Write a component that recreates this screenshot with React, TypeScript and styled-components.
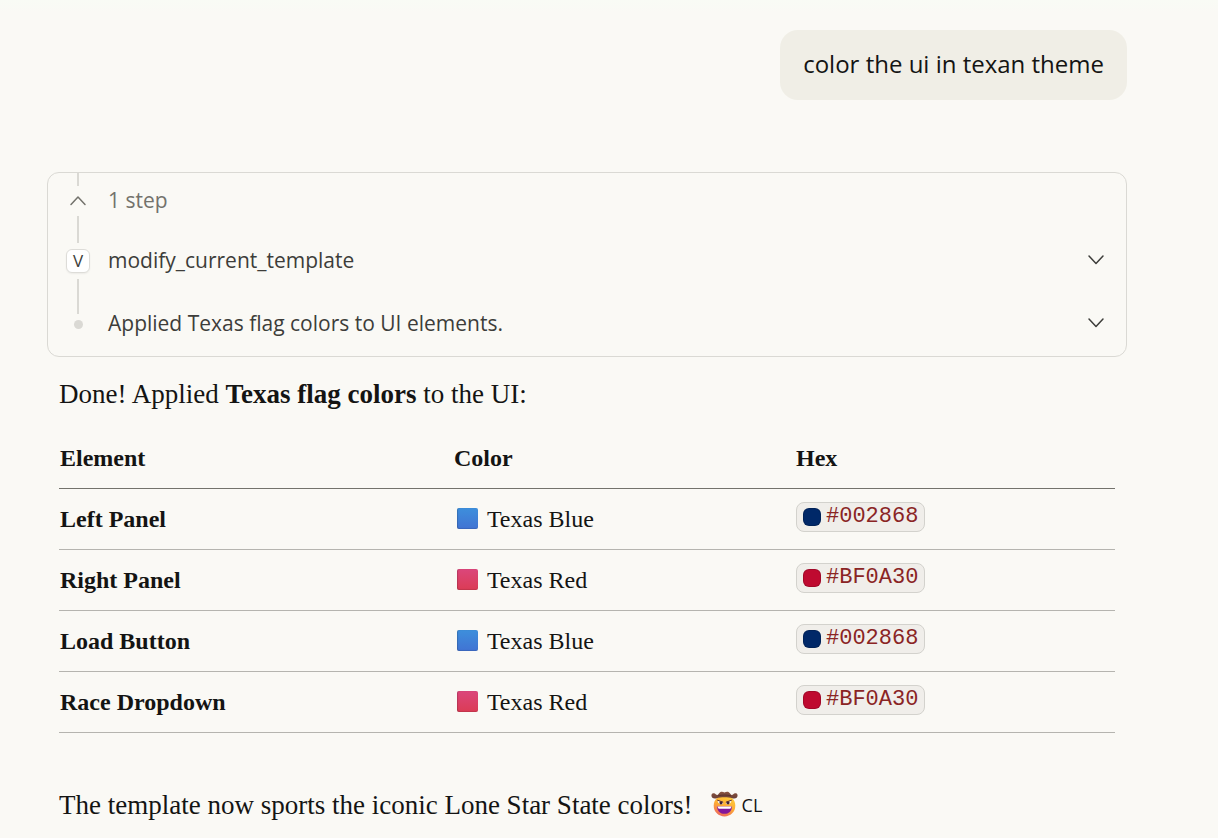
import React, { useId } from "react";
import styled, { createGlobalStyle } from "styled-components";

const sans = `"Open Sans", "Noto Sans", sans-serif`;
const serif = `"Liberation Serif", "Times New Roman", serif`;
const mono = `"Liberation Mono", "Courier New", monospace`;

const GlobalStyle = createGlobalStyle`
  *, *::before, *::after { box-sizing: border-box; }
  body {
    margin: 0;
    background: #faf9f5;
    color: #141413;
    font-family: ${serif};
  }
`;

const Page = styled.main`
  display: flex;
  flex-direction: column;
  padding: 30px 91px 14px 47px;
  background: linear-gradient(#f9fbf5, #faf9f5 12px);
`;

const UserBubble = styled.div`
  align-self: flex-end;
  padding: 16px 23px 18px;
  border-radius: 18px;
  background: #f0eee6;
  font: 24px/36px ${sans};
`;

const StepsCard = styled.section`
  display: flex;
  flex-direction: column;
  margin-top: 72px;
  border: 1px solid #dad9d4;
  border-radius: 12px;
  overflow: hidden;
`;

const StepRow = styled.button<{ $muted?: boolean }>`
  display: flex;
  align-items: stretch;
  gap: 16px;
  height: ${(p) => (p.$muted ? 57 : 63)}px;
  padding: 0 20px 0 16px;
  border: 0;
  background: none;
  color: ${(p) => (p.$muted ? "#73726c" : "#3d3d3a")};
  font: 21px/30px ${sans};
  text-align: left;
  cursor: pointer;
`;

const Rail = styled.span`
  display: flex;
  flex-direction: column;
  align-items: center;
  width: 28px;
`;

const RailLine = styled.span<{ $length?: number }>`
  width: 2px;
  ${(p) => (p.$length ? `height: ${p.$length}px;` : "flex: 1;")}
  background: #dad9d4;
`;

const RailMark = styled.span<{ $height: number }>`
  display: flex;
  align-items: center;
  justify-content: center;
  height: ${(p) => p.$height}px;
`;

const ToolBadge = styled.span`
  display: flex;
  align-items: center;
  justify-content: center;
  width: 24px;
  height: 24px;
  border: 1px solid #dddcd8;
  border-radius: 6px;
  background: #fff;
  box-shadow: 0 1px 2px rgba(0, 0, 0, 0.06);
  font-size: 17px;
  line-height: 22px;
`;

const Dot = styled.span`
  width: 9px;
  height: 9px;
  border-radius: 50%;
  background: #dad9d4;
`;

const StepBody = styled.span`
  display: flex;
  flex: 1;
  align-items: center;
  justify-content: space-between;
  padding-bottom: 3px;
`;

const ChevronIcon = styled.svg`
  flex: none;
  width: 20px;
  height: 20px;
  fill: none;
  stroke: currentColor;
  stroke-width: 1.5;
  stroke-linecap: round;
  stroke-linejoin: round;
`;

const Answer = styled.article`
  display: flex;
  flex-direction: column;
  padding: 18px 12px 0;
`;

const Paragraph = styled.p`
  margin: 0;
  font-size: 27px;
  line-height: 38px;
`;

const ColorTable = styled.table`
  width: 100%;
  margin: 15px 0 53px;
  border-collapse: collapse;
  table-layout: fixed;
  font-size: 24px;
  line-height: 30px;
  text-align: left;
`;

const HeadCell = styled.th<{ $width: string }>`
  width: ${(p) => p.$width};
  height: 60px;
  padding: 0 1px;
  border-bottom: 1px solid #73726c;
`;

const cell = `
  height: 61px;
  padding: 0 1px;
  border-bottom: 1px solid #b5b4af;
`;
const RowHead = styled.th`${cell}`;
const Cell = styled.td`${cell}`;
const HexCell = styled.td`
  ${cell}
  padding-bottom: 3px;
`;

const ColorName = styled.span`
  display: flex;
  align-items: center;
  gap: 9px;
  padding-left: 3px;
`;

const Square = styled.span<{ $from: string; $to: string }>`
  width: 21px;
  height: 21px;
  border-radius: 2px;
  background: linear-gradient(${(p) => p.$from}, ${(p) => p.$to});
  box-shadow: inset 1px 0 1px rgba(0, 0, 0, 0.16), inset 0 -1px 1px rgba(0, 0, 0, 0.1);
`;

const HexChip = styled.code`
  display: flex;
  align-items: center;
  gap: 5px;
  width: fit-content;
  height: 30px;
  padding: 0 6px;
  border: 1px solid #d3d2cd;
  border-radius: 8px;
  background: #f0eeea;
  color: #8a2424;
  font: 22px/28px ${mono};
`;

const HexSwatch = styled.span<{ $color: string }>`
  width: 18px;
  height: 18px;
  border: 1px solid rgba(0, 0, 0, 0.15);
  border-radius: 6px;
  background: ${(p) => p.$color};
`;

const Closing = styled(Paragraph)`
  display: flex;
  align-items: center;
  gap: 18px;
`;

const Signature = styled.span`
  display: inline-flex;
  align-items: center;
  gap: 4px;
  font: 18px/38px ${sans};
`;

const Cowboy = styled.svg`
  width: 27px;
  height: 27px;
`;

const Chevron = ({ up = false }: { up?: boolean }) => (
  <ChevronIcon viewBox="0 0 20 20" aria-hidden="true">
    <path d={up ? "M3 13.5 10 6 17 13.5" : "M3 6 10 13.5 17 6"} />
  </ChevronIcon>
);

function CowboyFace() {
  const id = useId();
  return (
    <Cowboy viewBox="0 0 27 27" role="img" aria-label="cowboy face">
      <defs>
        <linearGradient id={`${id}f`} x1="0.8" y1="0" x2="0.4" y2="1">
          <stop offset="0" stopColor="#ffd23c" />
          <stop offset="0.55" stopColor="#fdac35" />
          <stop offset="1" stopColor="#ee6b5c" />
        </linearGradient>
        <linearGradient id={`${id}h`} x1="0" y1="0" x2="0" y2="1">
          <stop offset="0" stopColor="#87513f" />
          <stop offset="1" stopColor="#6b4037" />
        </linearGradient>
      </defs>
      <circle cx="13.5" cy="14.7" r="10.8" fill={`url(#${id}f)`} />
      <path
        d="M.6 3.400C-.2 6.200 2 8.300 5.600 7.300 9.500 5.900 17.500 5.900 21.400 7.300 25 8.300 27.200 6.200 26.400 3.400 25.600 1.700 23.300 2 22 3.600 21 4.500 20 4 19.300 2.800 18 .3 15.500.2 13.500 1.500 11.500.2 9 .3 7.700 2.800 7 4 6 4.500 5 3.600 3.700 2 1.400 1.700.6 3.400Z"
        fill={`url(#${id}h)`}
      />
      <path d="M7 4.800c4.100-1 8.900-1 13 0" fill="none" stroke="#54302c" strokeWidth="0.9" />
      <path d="M6.600 9.600 12.300 11.800C12 14 7 14.200 6.600 9.600ZM20.400 9.600 14.700 11.800C15 14 20 14.200 20.400 9.600Z" fill="#fff" />
      <circle cx="10" cy="11.800" r="1.600" fill="#412334" />
      <circle cx="17" cy="11.800" r="1.600" fill="#412334" />
      <path d="M6.600 9.300 11.800 11.100M20.400 9.300 15.200 11.100" fill="none" stroke="#5a3038" strokeWidth="1" strokeLinecap="round" />
      <path d="M6.200 15.400h14.600c0 4.800-3.200 7.400-7.300 7.400s-7.300-2.600-7.300-7.400Z" fill="#82169b" />
      <path d="M6.600 15.400h13.800l-.5 1.700c-.2.500-.5.700-1 .7H8.100c-.5 0-.8-.2-1-.7Z" fill="#fff" />
    </Cowboy>
  );
}

const blue = { name: "Texas Blue", hex: "#002868", from: "#3d8fdc", to: "#4173d3" };
const red = { name: "Texas Red", hex: "#BF0A30", from: "#db467b", to: "#db3c55" };

const rows = [
  { element: "Left Panel", color: blue },
  { element: "Right Panel", color: red },
  { element: "Load Button", color: blue },
  { element: "Race Dropdown", color: red },
];

export default function App() {
  return (
    <>
      <GlobalStyle />
      <Page>
        <UserBubble>color the ui in texan theme</UserBubble>

        <StepsCard>
          <StepRow type="button" $muted aria-expanded="true">
            <Rail>
              <RailLine $length={13} />
              <RailMark $height={30}>
                <Chevron up />
              </RailMark>
              <RailLine />
            </Rail>
            <StepBody>1 step</StepBody>
          </StepRow>
          <StepRow type="button" aria-expanded="false">
            <Rail>
              <RailLine $length={13} />
              <RailMark $height={36}>
                <ToolBadge>V</ToolBadge>
              </RailMark>
              <RailLine />
            </Rail>
            <StepBody>
              modify_current_template
              <Chevron />
            </StepBody>
          </StepRow>
          <StepRow type="button" aria-expanded="false">
            <Rail>
              <RailLine $length={21} />
              <RailMark $height={21}>
                <Dot />
              </RailMark>
            </Rail>
            <StepBody>
              Applied Texas flag colors to UI elements.
              <Chevron />
            </StepBody>
          </StepRow>
        </StepsCard>

        <Answer>
          <Paragraph>
            Done! Applied <strong>Texas flag colors</strong> to the UI:
          </Paragraph>

          <ColorTable>
            <thead>
              <tr>
                <HeadCell scope="col" $width="37.3%">Element</HeadCell>
                <HeadCell scope="col" $width="32.4%">Color</HeadCell>
                <HeadCell scope="col" $width="30.3%">Hex</HeadCell>
              </tr>
            </thead>
            <tbody>
              {rows.map(({ element, color }) => (
                <tr key={element}>
                  <RowHead scope="row">{element}</RowHead>
                  <Cell>
                    <ColorName>
                      <Square $from={color.from} $to={color.to} />
                      {color.name}
                    </ColorName>
                  </Cell>
                  <HexCell>
                    <HexChip>
                      <HexSwatch $color={color.hex} />
                      {color.hex}
                    </HexChip>
                  </HexCell>
                </tr>
              ))}
            </tbody>
          </ColorTable>

          <Closing>
            The template now sports the iconic Lone Star State colors!
            <Signature>
              <CowboyFace />
              CL
            </Signature>
          </Closing>
        </Answer>
      </Page>
    </>
  );
}
